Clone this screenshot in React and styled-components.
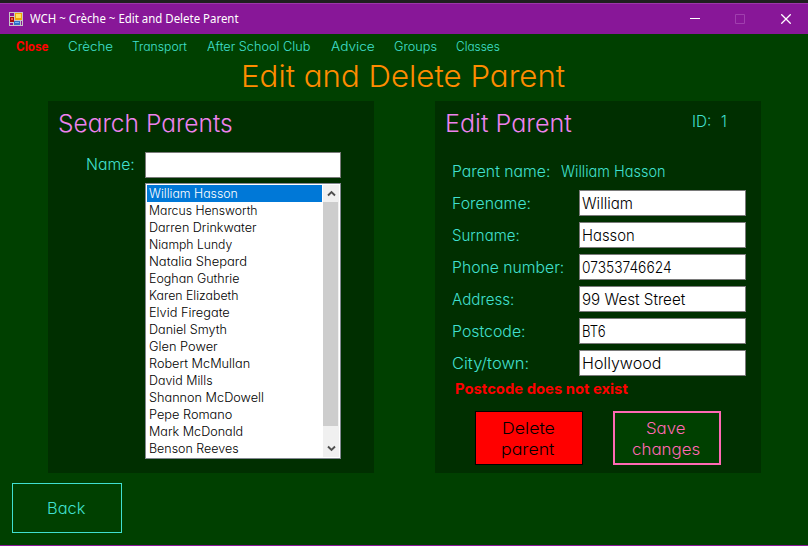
import React, { useLayoutEffect, useRef, useState } from "react";
import styled, { createGlobalStyle } from "styled-components";

const GlobalStyle = createGlobalStyle`
  * { box-sizing: border-box; }
  body {
    margin: 0;
    background: #004000;
    font-family: Inter, "Century Gothic", sans-serif;
    font-feature-settings: "cv11";
    font-weight: 300;
  }
`;

const Window = styled.div`
  display: flex;
  flex-direction: column;
  width: 808px;
  height: 546px;
  overflow: hidden;
  background: #004000;
  border-top: 3px solid #1f1f1f;
  border-bottom: 1px solid #8a1a98;
`;

const TitleBar = styled.header`
  display: flex;
  align-items: center;
  flex: none;
  height: 31px;
  padding-left: 9px;
  background: #881798;
  border-top: 1px solid #9c37a9;
  color: #fff;
`;

const Caption = styled.div`
  flex: 1;
  padding-left: 6px;
  font: 400 12px/16px "Noto Sans", "Open Sans", sans-serif;
`;

const WindowControls = styled.div`
  display: flex;
  margin-right: -1px;
`;

const ControlButton = styled.div`
  display: grid;
  place-items: center;
  width: 46px;
  height: 30px;
  color: ${(p) => (p.$disabled ? "#a03fae" : "#fff")};

  &:first-child {
    padding-left: 2px;
  }
`;

const MenuBar = styled.nav`
  display: flex;
  flex: none;
  height: 24px;
  padding-left: 15px;
`;

const MenuItem = styled.a`
  flex: none;
  width: ${(p) => p.$slot}px;
  font-size: 12.5px;
  line-height: 26px;
  font-weight: ${(p) => (p.$active ? 700 : 300)};
  color: ${(p) => (p.$active ? "#ff0000" : "#40e0d0")};
`;

const PageTitle = styled.h1`
  flex: none;
  height: 43px;
  margin: 0;
  padding-left: 240px;
  font-size: 30px;
  line-height: 37px;
  font-weight: 300;
  color: #ff8c00;
`;

const Panels = styled.main`
  display: flex;
  gap: 61px;
  flex: none;
  height: 372px;
  padding-left: 48px;
`;

const Panel = styled.section`
  display: flex;
  flex-direction: column;
  width: 326px;
  background: #002f00;
  color: #40e0d0;
  font-size: 15.5px;
`;

const PanelHeader = styled.div`
  display: flex;
  flex: none;
  height: ${(p) => p.$height}px;
  padding-left: 9px;
`;

const PanelTitle = styled.h2`
  width: 247px;
  margin: 0;
  font-size: 24px;
  line-height: 46px;
  font-weight: 300;
  color: #ee82ee;
`;

const RecordId = styled.div`
  display: flex;
  gap: 8px;
  line-height: 42px;
`;

const SearchRow = styled.div`
  display: flex;
  flex: none;
  height: 26px;
  padding-left: 37px;
`;

const SearchLabel = styled.label`
  width: 60px;
  line-height: 26px;
`;

const Input = styled.div`
  width: ${(p) => p.$width}px;
  height: 26px;
  padding-left: 1px;
  border: 1px solid #7a7a7a;
  background: #fff;
  color: #000;
  line-height: 26px;
`;

const ListBox = styled.div`
  display: flex;
  width: 196px;
  height: 276px;
  margin: 5px 0 0 97px;
  padding: 1px;
  border: 1px solid #828790;
  background: #fff;
`;

const Options = styled.div`
  flex: none;
  width: 175px;
  overflow: hidden;
`;

const Option = styled.div`
  height: 17px;
  padding-left: 1.5px;
  font-size: 12.5px;
  line-height: 18px;
  background: ${(p) => (p.$selected ? "#0078d7" : "#fff")};
  color: ${(p) => (p.$selected ? "#fff" : "#000")};
`;

const ScrollBar = styled.div`
  display: flex;
  flex-direction: column;
  width: 16px;
  height: 272px;
  margin-left: 1px;
  background: #f0f0f0;
`;

const ScrollArrow = styled.div`
  display: grid;
  place-items: center;
  height: 17px;
`;

const ScrollThumb = styled.div`
  width: 15px;
  height: 224px;
  margin-bottom: 14px;
  background: #cdcdcd;
`;

const NameRow = styled.div`
  display: flex;
  flex: none;
  gap: 9px;
  height: 30px;
  padding-left: 16px;
  line-height: 24px;
`;

const Form = styled.div`
  display: grid;
  flex: none;
  grid-template-columns: 128px 167px;
  grid-auto-rows: 26px;
  row-gap: 6px;
  padding-left: 16px;
`;

const FieldLabel = styled.label`
  line-height: 27px;
`;

const ErrorMessage = styled.div`
  flex: none;
  height: 35px;
  padding-left: 19px;
  font-size: 14.5px;
  font-weight: 700;
  line-height: 26px;
  color: #ff0000;
`;

const Actions = styled.div`
  display: flex;
  gap: 30px;
  padding-left: 40px;
`;

const ActionButton = styled.div`
  display: flex;
  flex-direction: column;
  align-items: center;
  width: 108px;
  height: 54px;
  padding: ${(p) => (p.$danger ? 6 : 5)}px 2px 0 0;
  border: ${(p) => (p.$danger ? "1px solid #000" : "2px solid #ff69b4")};
  background: ${(p) => (p.$danger ? "#ff0000" : "#004000")};
  color: ${(p) => (p.$danger ? "#000" : "#ff69b4")};
  font-size: 16.5px;
  line-height: 21px;
`;

const BackButton = styled.div`
  display: grid;
  place-items: center;
  flex: none;
  width: 110px;
  height: 50px;
  margin: 10px 0 0 12px;
  padding-right: 2px;
  border: 1px solid #40e0d0;
  color: #40e0d0;
  font-size: 16.5px;
`;

const FitBox = styled.span`
  display: inline-block;
  flex: none;
  width: ${(p) => p.$width}px;
  padding-left: 0.8px;
  white-space: pre;
`;

const Stretched = styled.span`
  display: inline-block;
  transform-origin: left center;
`;

/* Widens or narrows the letters so that the text fills the given width. */
function Fit({ w, children }) {
  const ref = useRef(null);
  const [scale, setScale] = useState(1);
  useLayoutEffect(() => {
    setScale((w - 1.3) / ref.current.offsetWidth);
  }, [w]);
  return (
    <FitBox $width={w}>
      <Stretched ref={ref} style={{ transform: `scaleX(${scale})` }}>
        {children}
      </Stretched>
    </FitBox>
  );
}

const menu = [
  ["Close", 34, 52],
  ["Crèche", 46, 64],
  ["Transport", 56, 75],
  ["After School Club", 105, 124],
  ["Advice", 45, 63],
  ["Groups", 44, 62],
  ["Classes", 45, 60],
];

const parents = [
  ["William Hasson", 90],
  ["Marcus Hensworth", 110],
  ["Darren Drinkwater", 109],
  ["Niamph Lundy", 85],
  ["Natalia Shepard", 99],
  ["Eoghan Guthrie", 92],
  ["Karen Elizabeth", 91],
  ["Elvid Firegate", 82],
  ["Daniel Smyth", 79],
  ["Glen Power", 70],
  ["Robert McMullan", 102],
  ["David Mills", 65],
  ["Shannon McDowell", 116],
  ["Pepe Romano", 85],
  ["Mark McDonald", 96],
  ["Benson Reeves", 91],
];

const fields = [
  ["Forename:", 80, "William", 52],
  ["Surname:", 69, "Hasson", 54],
  ["Phone number:", 114, "07353746624", 91],
  ["Address:", 64, "99 West Street", 105],
  ["Postcode:", 75, "BT6", 25],
  ["City/town:", 79, "Hollywood", 81],
];

const AppIcon = () => (
  <svg width="14" height="14" viewBox="0 0 14 14" shapeRendering="crispEdges">
    <path d="M0 0h14v14H0z" fill="#c8c4c8" />
    <path d="M1 1h4v3H1zM1 11h3v2H1zM12 9h1v4h-1z" fill="#881798" />
    <path d="M6 1h7v7H6z" fill="#f0a808" />
    <path d="M7 2h5v4H7z" fill="#ffe060" />
    <path d="M1 5h4v5H1z" fill="#a80d08" />
    <path d="M2 6h2v2H2z" fill="#f06048" />
    <path d="M5 9h6v4H5z" fill="#3070c8" />
    <path d="M6 10h4v1H6z" fill="#78b8f8" />
  </svg>
);

const Chevron = ({ down }) => (
  <svg width="9" height="7" viewBox="0 0 9 7">
    <path d={down ? "M1 1.5 4.5 5 8 1.5" : "M1 5.5 4.5 2 8 5.5"} fill="none" stroke="#505050" strokeWidth="1.9" />
  </svg>
);

export default function App() {
  return (
    <>
      <GlobalStyle />
      <Window>
        <TitleBar>
          <AppIcon />
          <Caption><Fit w={210}>WCH ~ Crèche ~ Edit and Delete Parent</Fit></Caption>
          <WindowControls>
            <ControlButton>
              <svg width="10" height="10"><path d="M0 4.5h10" stroke="currentColor" /></svg>
            </ControlButton>
            <ControlButton $disabled>
              <svg width="10" height="10"><path d="M.5.5h9v9h-9z" fill="none" stroke="currentColor" /></svg>
            </ControlButton>
            <ControlButton>
              <svg width="10" height="10"><path d="m.3.3 9.4 9.4m0-9.4L.3 9.7" stroke="currentColor" strokeWidth="1.3" /></svg>
            </ControlButton>
          </WindowControls>
        </TitleBar>
        <MenuBar>
          {menu.map(([label, w, slot], i) => (
            <MenuItem key={label} $slot={slot} $active={i === 0}><Fit w={w}>{label}</Fit></MenuItem>
          ))}
        </MenuBar>
        <PageTitle><Fit w={325}>Edit and Delete Parent</Fit></PageTitle>
        <Panels>
          <Panel>
            <PanelHeader $height={51}>
              <PanelTitle><Fit w={176}>Search Parents</Fit></PanelTitle>
            </PanelHeader>
            <SearchRow>
              <SearchLabel><Fit w={50}>Name:</Fit></SearchLabel>
              <Input $width={196} />
            </SearchRow>
            <ListBox>
              <Options>
                {parents.map(([name, w], i) => (
                  <Option key={name} $selected={i === 0}><Fit w={w}>{name}</Fit></Option>
                ))}
              </Options>
              <ScrollBar>
                <ScrollArrow><Chevron /></ScrollArrow>
                <ScrollThumb />
                <ScrollArrow><Chevron down /></ScrollArrow>
              </ScrollBar>
            </ListBox>
          </Panel>
          <Panel>
            <PanelHeader $height={59}>
              <PanelTitle><Fit w={128}>Edit Parent</Fit></PanelTitle>
              <RecordId>
                <Fit w={21}>ID:</Fit>
                <Fit w={7}>1</Fit>
              </RecordId>
            </PanelHeader>
            <NameRow>
              <Fit w={100}>Parent name:</Fit>
              <Fit w={106}>William Hasson</Fit>
            </NameRow>
            <Form>
              {fields.map(([label, lw, value, vw]) => (
                <React.Fragment key={label}>
                  <FieldLabel><Fit w={lw}>{label}</Fit></FieldLabel>
                  <Input $width={167}><Fit w={vw}>{value}</Fit></Input>
                </React.Fragment>
              ))}
            </Form>
            <ErrorMessage><Fit w={174}>Postcode does not exist</Fit></ErrorMessage>
            <Actions>
              <ActionButton $danger>
                <Fit w={54}>Delete</Fit>
                <Fit w={55}>parent</Fit>
              </ActionButton>
              <ActionButton>
                <Fit w={41}>Save</Fit>
                <Fit w={70}>changes</Fit>
              </ActionButton>
            </Actions>
          </Panel>
        </Panels>
        <BackButton><Fit w={40}>Back</Fit></BackButton>
      </Window>
    </>
  );
}
